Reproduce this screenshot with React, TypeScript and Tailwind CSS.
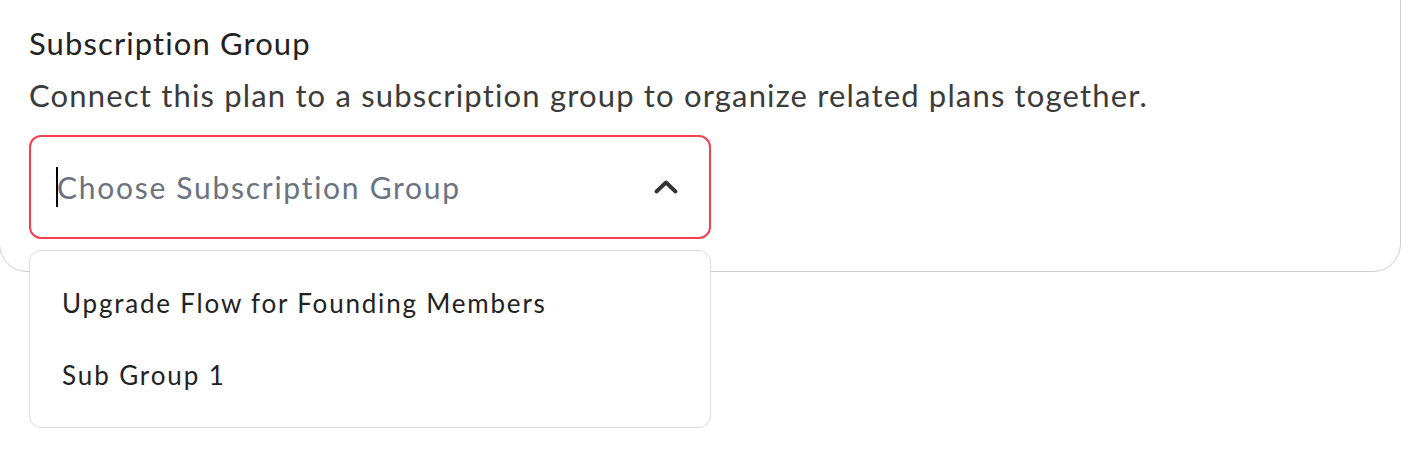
import React from "react";

export default function App() {
  const font = { fontFamily: "Lato, 'Noto Sans', sans-serif" };
  return (
    <div className="w-[1418px] h-[452px] bg-white overflow-hidden [font-variant-ligatures:none]" style={font}>
      <div className="-mt-[40px] -ml-px w-[1402px] border border-[#cfcfcf] rounded-[28px] bg-white pl-[28px] pt-[64px] pb-[32px]">
        <div className="ml-px text-[31px] leading-[37px] tracking-[1.1px] text-[#222222]">Subscription Group</div>
        <div className="ml-px mt-[15px] text-[31px] leading-[37px] tracking-[1.17px] text-[#3b3b3b]">
          Connect this plan to a subscription group to organize related plans together.
        </div>
        <div className="relative mt-[21px] w-[682px] ml-px">
          <div className="h-[104px] border-2 border-[#f43f4e] rounded-[12px] flex items-center pl-[26px] pr-[31px]">
            <div className="relative flex-1 text-[30px] leading-[36px] tracking-[1.72px] text-[#6b7280]">
              <span className="absolute -left-[1px] top-[-2px] w-[2px] h-[40px] bg-black" />
              Choose Subscription Group
            </div>
            <svg width="24" height="14" viewBox="0 0 24 14" className="shrink-0">
              <polyline
                points="2.5,11.5 12,2.5 21.5,11.5"
                fill="none"
                stroke="#333333"
                strokeWidth="3.8"
                strokeLinecap="round"
                strokeLinejoin="round"
              />
            </svg>
          </div>
          <div className="absolute left-0 top-[115px] w-[682px] h-[178px] border-[1.5px] border-[#dddddd] rounded-[12px] bg-white py-[16px] z-10">
            <div className="h-[72px] flex items-center pl-[32px] text-[26px] tracking-[1.8px] text-[#222222]">
              Upgrade Flow for Founding Members
            </div>
            <div className="h-[72px] flex items-center pl-[32px] text-[26px] tracking-[1.9px] text-[#222222]">
              Sub Group 1
            </div>
          </div>
        </div>
      </div>
    </div>
  );
}
